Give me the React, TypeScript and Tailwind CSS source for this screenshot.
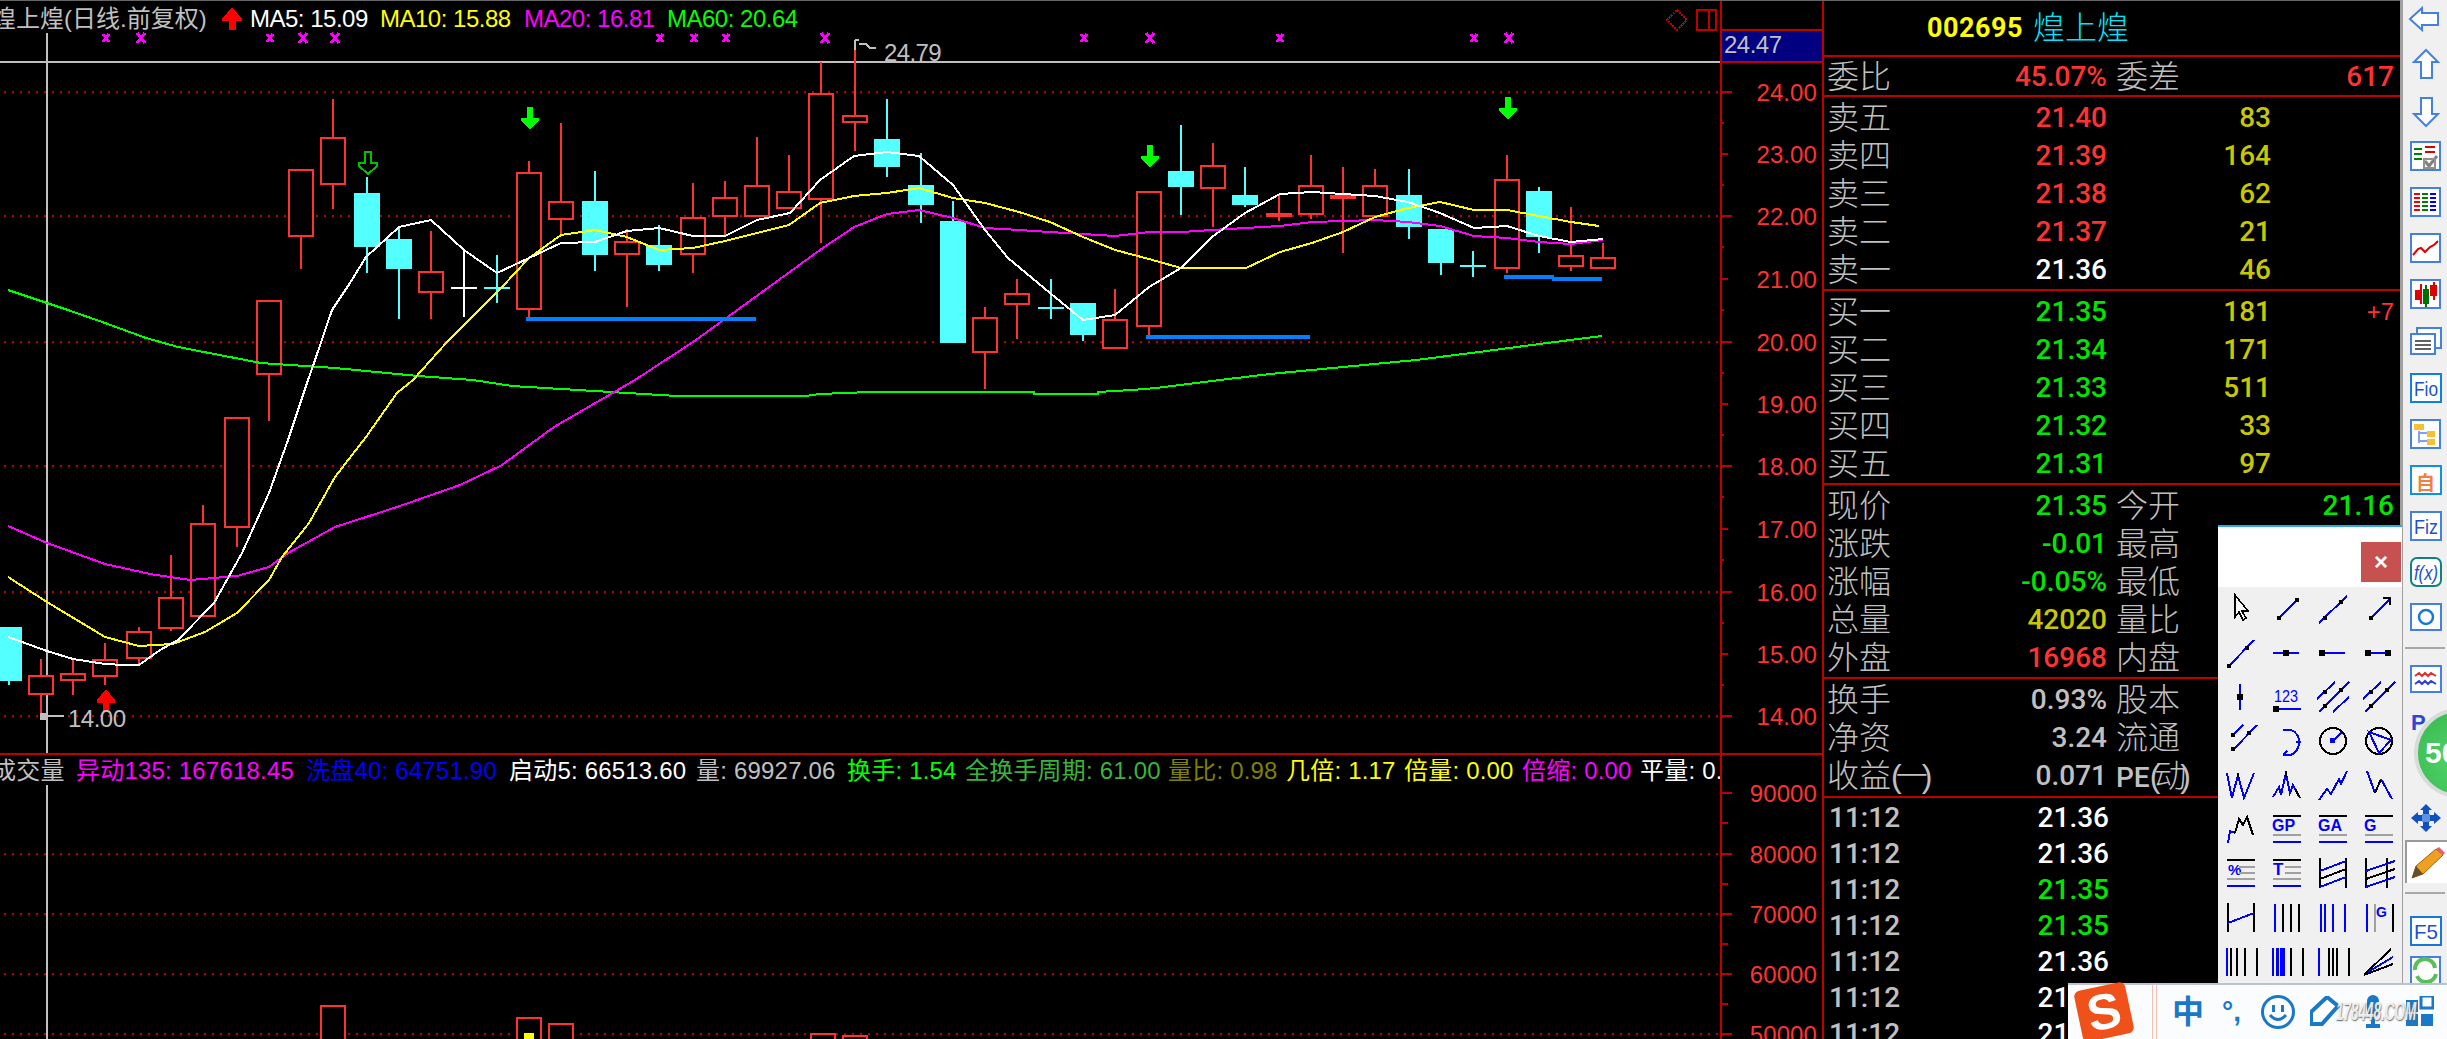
import React from "react";

const FF = "'Liberation Sans','Noto Sans CJK SC',sans-serif";
const RED = "#ff3232";
const CY = "#54ffff";
const DK = "#c00000";

type C = [number, "r" | "c" | "w" | "f" | "d", number, number, number, number];
// x, kind, high, top, bottom, low
const candles: C[] = [
  [9, "c", 627, 627, 681, 685], [41, "r", 659, 675, 695, 715], [73, "r", 659, 673, 681, 695], [105, "r", 643, 659, 677, 685],
  [139, "r", 627, 631, 659, 665], [171, "r", 555, 597, 629, 631], [203, "r", 505, 523, 617, 617], [237, "r", 417, 417, 528, 547],
  [269, "r", 300, 300, 375, 421], [301, "r", 169, 169, 237, 269], [333, "r", 99, 137, 185, 209], [367, "c", 177, 193, 247, 273],
  [399, "c", 227, 239, 269, 319], [431, "r", 231, 271, 293, 319], [464, "w", 251, 288, 288, 317], [497, "d", 255, 288, 288, 303],
  [529, "r", 161, 172, 310, 317], [561, "r", 123, 201, 220, 235], [595, "c", 171, 201, 255, 271], [627, "r", 229, 241, 255, 307],
  [659, "c", 225, 245, 265, 271], [693, "r", 183, 217, 255, 273], [725, "r", 181, 197, 217, 236], [757, "r", 137, 185, 217, 217],
  [789, "r", 155, 191, 209, 209], [821, "r", 62, 93, 200, 243], [855, "r", 47, 115, 123, 151], [887, "c", 99, 139, 167, 177],
  [921, "c", 153, 185, 205, 223], [953, "c", 201, 221, 343, 343], [985, "r", 307, 317, 353, 389], [1017, "r", 279, 293, 305, 339],
  [1051, "d", 279, 308, 308, 319], [1083, "c", 303, 303, 335, 341], [1115, "r", 289, 319, 349, 349], [1149, "r", 191, 191, 327, 335],
  [1181, "c", 125, 171, 187, 215], [1213, "r", 143, 165, 189, 227], [1245, "c", 167, 195, 205, 207], [1279, "f", 195, 213, 217, 221],
  [1311, "r", 155, 185, 215, 219], [1343, "f", 167, 195, 199, 253], [1375, "r", 169, 185, 217, 217], [1409, "c", 169, 195, 227, 239],
  [1441, "c", 229, 229, 263, 275], [1473, "d", 251, 266, 266, 277], [1507, "r", 155, 179, 269, 273], [1539, "c", 187, 191, 237, 253],
  [1571, "r", 207, 255, 267, 271], [1603, "r", 243, 257, 269, 269],
];

const ma5 = "8,637 47,651 73,659 105,664 125,665 139,665 160,650 178,640 214,603 242,553 269,493 288,440 308,380 314,363 332,310 350,283 366,257 399,227 431,220 464,250 497,273 529,258 561,243 595,242 627,231 659,228 693,236 725,236 757,220 790,213 820,180 854,156 887,152 919,156 953,185 985,230 1008,258 1050,293 1083,320 1115,315 1149,287 1181,268 1212,237 1245,213 1280,194 1312,192 1343,194 1375,196 1408,202 1440,213 1474,228 1507,226 1539,236 1571,242 1603,239";
const ma10 = "8,577 47,602 105,637 139,646 173,644 205,632 237,613 269,580 282,557 309,523 335,477 366,437 397,393 413,380 447,342 502,287 529,258 561,235 595,230 627,237 659,250 693,248 725,241 757,233 789,225 820,203 854,196 887,193 919,188 953,198 985,203 1019,212 1050,222 1083,237 1115,250 1149,259 1181,268 1246,268 1280,252 1312,243 1343,232 1375,217 1408,208 1440,202 1474,210 1507,210 1539,216 1571,222 1599,226";
const ma20 = "8,526 47,543 105,564 150,574 190,580 237,576 269,567 288,553 335,527 397,507 460,485 502,465 554,427 635,380 696,340 820,250 854,227 887,214 919,210 953,218 985,228 1019,230 1050,232 1083,234 1115,236 1149,232 1181,232 1212,230 1246,228 1280,226 1312,222 1375,220 1408,222 1440,226 1474,236 1507,238 1539,242 1571,244 1603,240";
const ma60 = "8,290 47,303 68,310 105,323 146,338 178,347 261,363 335,368 418,376 473,380 512,386 578,390 677,396 805,396 820,394 870,392 1034,392 1034,394 1098,394 1098,392 1132,390 1156,388 1188,384 1220,380 1270,374 1343,367 1416,360 1479,352 1547,343 1602,336";

const xmarks: [number, number][] = [[106, 3], [141, 4], [270, 3], [303, 4], [335, 4], [660, 3], [694, 3], [726, 3], [825, 4], [1084, 3], [1150, 4], [1280, 3], [1474, 3], [1509, 4]];
const priceTicks: [number, string][] = [[92, "24.00"], [154, "23.00"], [216, "22.00"], [279, "21.00"], [342, "20.00"], [404, "19.00"], [466, "18.00"], [529, "17.00"], [592, "16.00"], [654, "15.00"], [716, "14.00"]];
const volTicks: [number, string][] = [[793, "90000"], [854, "80000"], [914, "70000"], [974, "60000"], [1034, "50000"]];

function DownArrow({ x, y, hollow }: { x: number; y: number; hollow?: boolean }) {
  const p = `${x - 3},${y} ${x + 3},${y} ${x + 3},${y + 11} ${x + 9},${y + 11} ${x + 9},${y + 14} ${x},${y + 22} ${x - 9},${y + 14} ${x - 9},${y + 11} ${x - 3},${y + 11}`;
  return <polygon points={p} fill={hollow ? "none" : "#00ff00"} stroke={hollow ? "#00c000" : "#00ff00"} strokeWidth={hollow ? 2 : 0} />;
}

function PriceChart() {
  return (
    <svg className="block" width={1720} height={752} viewBox="0 1 1720 752" shapeRendering="crispEdges">
      {[92, 216, 342, 466, 592, 716].map((y) => (
        <line key={y} x1={4} x2={1720} y1={y} y2={y} stroke={DK} strokeWidth={2} strokeDasharray="2 6" />
      ))}
      <rect x={46} y={33} width={2} height={720} fill="#c0c0c0" />
      <rect x={0} y={61} width={1720} height={2} fill="#c0c0c0" />
      {candles.map(([x, k, hi, top, bot, lo]) => {
        const col = k === "c" || k === "d" ? CY : k === "w" ? "#ffffff" : RED;
        return (
          <g key={x}>
            <rect x={x - 1} y={hi} width={2} height={lo - hi} fill={col} />
            {k === "r" && <rect x={x - 12} y={top + 1} width={24} height={bot - top - 2} fill="#000" stroke={RED} strokeWidth={2} />}
            {k === "c" && <rect x={x - 13} y={top} width={26} height={bot - top} fill={CY} />}
            {k === "f" && <rect x={x - 13} y={top} width={26} height={bot - top} fill={RED} />}
            {(k === "w" || k === "d") && <rect x={x - 13} y={top - 1} width={26} height={2} fill={col} />}
          </g>
        );
      })}
      <polyline points={ma60} fill="none" stroke="#00ff00" strokeWidth={2} />
      <polyline points={ma20} fill="none" stroke="#ff00ff" strokeWidth={2} />
      <polyline points={ma10} fill="none" stroke="#ffff00" strokeWidth={2} />
      <polyline points={ma5} fill="none" stroke="#ffffff" strokeWidth={2} />
      <rect x={526} y={317} width={230} height={4} fill="#0080ff" />
      <rect x={1146} y={335} width={164} height={4} fill="#0080ff" />
      <rect x={1504} y={275} width={50} height={4} fill="#0080ff" />
      <rect x={1552} y={277} width={50} height={4} fill="#0080ff" />
      {xmarks.map(([x, r]) => (
        <path key={x} d={`M${x - r} ${38 - r - 1}L${x + r} ${38 + r + 1}M${x + r} ${38 - r - 1}L${x - r} ${38 + r + 1}`} stroke="#ff00ff" strokeWidth={3} fill="none" />
      ))}
      <DownArrow x={530} y={107} />
      <DownArrow x={1150} y={145} />
      <DownArrow x={1508} y={97} />
      <DownArrow x={368} y={152} hollow />
      <polygon points="106,689 115,700 115,703 109,703 109,711 103,711 103,703 97,703 97,700" fill="#ff0000" />
      <path d="M855 40V50M855 40H859M859 44H866L870 48H876" stroke="#c0c0c0" strokeWidth={2} fill="none" />
      <text x={884} y={61} fill="#c0c0c0" fontFamily={FF} fontSize={24} letterSpacing={-0.6} shapeRendering="auto">24.79</text>
      <rect x={40} y={713} width={6} height={7} fill="#c0c0c0" />
      <rect x={46} y={715} width={18} height={2} fill="#c0c0c0" />
      <text x={68} y={727} fill="#c0c0c0" fontFamily={FF} fontSize={24} letterSpacing={-0.5}>14.00</text>
      <path d="M1677 10L1687 20L1677 30L1667 20Z" fill="none" stroke={DK} strokeWidth={2} strokeDasharray="2 1" />
      <rect x={1697} y={10} width={19} height={20} fill="none" stroke={DK} strokeWidth={2} />
      <rect x={1708} y={10} width={2} height={20} fill={DK} />
    </svg>
  );
}

function PriceAxis() {
  return (
    <svg className="block" width={100} height={752} viewBox="1722 1 100 752" shapeRendering="crispEdges">
      <rect x={1722} y={29} width={100} height={34} fill={DK} />
      <rect x={1722} y={31} width={100} height={30} fill="#000080" />
      <text x={1724} y={53} fill="#c0c0c0" fontFamily={FF} fontSize={24} letterSpacing={-0.5}>24.47</text>
      {priceTicks.map(([y, t], i) => (
        <g key={t}>
          <rect x={1722} y={y - 1} width={i % 2 === 0 ? 10 : 6} height={2} fill={DK} />
          {i < 10 && <rect x={1722} y={y + 30} width={2} height={2} fill={DK} />}
          <text x={1817} y={y + 9} textAnchor="end" fill={RED} fontFamily={FF} fontSize={24} letterSpacing={0.1}>{t}</text>
        </g>
      ))}
    </svg>
  );
}

function VolumeChart() {
  const bars: [number, number][] = [[320, 1005], [516, 1017], [548, 1023], [810, 1033], [842, 1035]];
  return (
    <svg className="block" width={1720} height={254} viewBox="0 785 1720 254" shapeRendering="crispEdges">
      {[854, 914, 974, 1034].map((y) => (
        <line key={y} x1={4} x2={1720} y1={y} y2={y} stroke={DK} strokeWidth={2} strokeDasharray="2 6" />
      ))}
      <rect x={46} y={785} width={2} height={254} fill="#c0c0c0" />
      {bars.map(([x, y]) => (
        <rect key={x} x={x + 1} y={y + 1} width={24} height={60} fill="#000" stroke={RED} strokeWidth={2} />
      ))}
      <rect x={524} y={1033} width={10} height={6} fill="#ffff00" />
    </svg>
  );
}

function VolumeAxis() {
  return (
    <svg className="block" width={100} height={284} viewBox="1722 755 100 284" shapeRendering="crispEdges">
      {volTicks.map(([y, t]) => (
        <g key={t}>
          <rect x={1722} y={y - 1} width={10} height={2} fill={DK} />
          <rect x={1722} y={y + 29} width={6} height={2} fill={DK} />
          <text x={1817} y={y + 9} textAnchor="end" fill={RED} fontFamily={FF} fontSize={24} letterSpacing={0.1}>{t}</text>
        </g>
      ))}
    </svg>
  );
}

const legend2 = [
  { t: "成交量", c: "text-[#c0c0c0] w-[84px] ml-[-8px]" },
  { t: "异动135: 167618.45", c: "text-[#ff00ff] w-[230px]" },
  { t: "洗盘40: 64751.90", c: "text-[#0000ff] w-[203px]" },
  { t: "启动5: 66513.60", c: "text-[#ffffff] w-[187px]" },
  { t: "量: 69927.06", c: "text-[#c0c0c0] w-[151px]" },
  { t: "换手: 1.54", c: "text-[#00ff00] w-[118px]" },
  { t: "全换手周期: 61.00", c: "text-[#3cb33c] w-[203px]" },
  { t: "量比: 0.98", c: "text-[#808000] w-[118px]" },
  { t: "几倍: 1.17", c: "text-[#ffff00] w-[118px]" },
  { t: "倍量: 0.00", c: "text-[#ffff00] w-[118px]" },
  { t: "倍缩: 0.00", c: "text-[#ff00ff] w-[118px]" },
  { t: "平量: 0.", c: "text-[#ffffff] w-[82px]" },
];

function Depth({ l, p, q, pc, e }: { l: string; p: string; q: string; pc: string; e?: string }) {
  return (
    <div className="flex h-[38px] items-center pl-[3px] pr-[6px] pt-[2px]">
      <span className="flex w-[280px] items-center justify-between">
        <span className="text-[32px] font-light leading-none text-[#c0c0c0]">{l}</span>
        <span className={`[font-family:Roboto] text-[28px] font-medium leading-none ${pc}`}>{p}</span>
      </span>
      <span className="w-[164px] text-right [font-family:Roboto] text-[28px] font-medium leading-none text-[#c8c800]">{q}</span>
      <span className="flex-1 text-right text-[24px] leading-none text-[#ff3232]">{e}</span>
    </div>
  );
}

function Quote({ l, v, vc, l2, v2 }: { l: React.ReactNode; v: string; vc: string; l2: React.ReactNode; v2?: string }) {
  return (
    <div className="flex h-[38px] items-center pl-[3px] pr-[6px] pt-[2px]">
      <span className="flex w-[280px] items-center justify-between">
        <span className="whitespace-nowrap text-[32px] font-light leading-none text-[#c0c0c0]">{l}</span>
        <span className={`[font-family:Roboto] text-[28px] font-medium leading-none ${vc}`}>{v}</span>
      </span>
      <span className="ml-[9px] flex flex-1 items-center justify-between">
        <span className="whitespace-nowrap text-[32px] font-light leading-none text-[#c0c0c0]">{l2}</span>
        <span className={`[font-family:Roboto] text-[28px] font-medium leading-none ${v === "45.07%" ? "text-[#ff3232]" : "text-[#00e600]"}`}>{v2}</span>
      </span>
    </div>
  );
}

function Panel() {
  const sells = [["卖五", "21.40", "83"], ["卖四", "21.39", "164"], ["卖三", "21.38", "62"], ["卖二", "21.37", "21"], ["卖一", "21.36", "46"]];
  const buys = [["买一", "21.35", "181", "+7"], ["买二", "21.34", "171"], ["买三", "21.33", "511"], ["买四", "21.32", "33"], ["买五", "21.31", "97"]];
  const trades = ["21.36", "21.36", "21.35", "21.35", "21.36", "21.36", "21.36"];
  return (
    <div className="w-[578px] shrink-0 border-l-2 border-[#c00000]">
      <div className="flex h-[56px] items-center border-b-2 border-[#c00000] pl-[103px]">
        <span className="[font-family:Roboto] text-[27px] font-bold leading-none tracking-[0.5px] text-[#ffff00]">002695</span>
        <span className="ml-[10px] text-[32px] font-light leading-none text-[#00e5ff]">煌上煌</span>
      </div>
      <div className="border-b-2 border-[#c00000]">
        <Quote l="委比" v="45.07%" vc="text-[#ff3232]" l2="委差" v2="617" />
      </div>
      <div className="border-b-2 border-[#c00000] py-px">
        {sells.map(([l, p, q]) => (
          <Depth key={l} l={l} p={p} q={q} pc={p === "21.36" ? "text-white" : "text-[#ff3232]"} />
        ))}
      </div>
      <div className="border-b-2 border-[#c00000] py-px">
        {buys.map(([l, p, q, e]) => (
          <Depth key={l} l={l} p={p} q={q} e={e} pc="text-[#00e600]" />
        ))}
      </div>
      <div className="border-b-2 border-[#c00000] py-px">
        <Quote l="现价" v="21.35" vc="text-[#00e600]" l2="今开" v2="21.16" />
        <Quote l="涨跌" v="-0.01" vc="text-[#00e600]" l2="最高" />
        <Quote l="涨幅" v="-0.05%" vc="text-[#00e600]" l2="最低" />
        <Quote l="总量" v="42020" vc="text-[#c8c800]" l2="量比" />
        <Quote l="外盘" v="16968" vc="text-[#ff3232]" l2="内盘" />
      </div>
      <div className="border-b-2 border-[#c00000] pb-[2px] pt-px">
        <Quote l="换手" v="0.93%" vc="text-[#c0c0c0]" l2="股本" />
        <Quote l="净资" v="3.24" vc="text-[#c0c0c0]" l2="流通" />
        <Quote
          l={<>收益<span className="tracking-[-6px]">(一)</span></>}
          v="0.071"
          vc="text-[#c0c0c0]"
          l2={<><span className="[font-family:Roboto] text-[28px] font-medium">PE</span><span className="tracking-[-6px]">(动)</span></>}
        />
      </div>
      {trades.map((p, i) => (
        <div key={i} className="flex h-[36px] w-[285px] items-center justify-between pl-[5px] pt-[3px] [font-family:Roboto] text-[28px] font-medium leading-none">
          <span className="text-[#c0c0c0]">11:12</span>
          <span className={i === 2 || i === 3 ? "text-[#00e600]" : "text-white"}>{p}</span>
        </div>
      ))}
    </div>
  );
}

const B = "#0000ff";
const K = "#000000";
const G = "#a0a0a0";
function Sq({ x, y, s = 4 }: { x: number; y: number; s?: number }) {
  return <rect x={x - s / 2} y={y - s / 2} width={s} height={s} fill={K} />;
}
function L({ d, c = B, w = 2 }: { d: string; c?: string; w?: number }) {
  return <path d={d} stroke={c} strokeWidth={w} fill="none" />;
}
function T({ x, y, t, s = 15, c = B }: { x: number; y: number; t: string; s?: number; c?: string }) {
  return <text x={x} y={y} fill={c} fontFamily={FF} fontSize={s} fontWeight={700} shapeRendering="auto">{t}</text>;
}
const Ver = (xs: [number, string, number?][]) => xs.map(([x, c, w], i) => <rect key={i} x={x} y={3} width={w ?? 2} height={28} fill={c} />);
const rule3 = (
  <>
    <L d="M2 3H30" c={K} />
    <L d="M2 22H30" c={G} />
    <L d="M2 29H30" />
  </>
);
const tools: React.ReactNode[] = [
  <path d="M10 2V24L14 19L18 27L21 25L17 18H23Z" fill="#f8f8f8" stroke={K} strokeWidth={1.6} />,
  <><L d="M8 25L26 7" /><Sq x={8} y={25} /><Sq x={26} y={7} /></>,
  <><L d="M2 30L30 3" /><Sq x={8} y={25} /><Sq x={24} y={9} /></>,
  <><L d="M8 25L27 6" /><L d="M20 5H27V12" c={K} /><Sq x={8} y={25} /></>,
  <><L d="M3 30L29 3" /><Sq x={4} y={29} /><Sq x={22} y={11} /></>,
  <><L d="M2 16H28" /><Sq x={15} y={16} s={6} /></>,
  <><L d="M2 16H28" /><Sq x={5} y={16} s={6} /></>,
  <><L d="M5 16H25" /><Sq x={5} y={16} s={6} /><Sq x={25} y={16} s={6} /></>,
  <><L d="M15 3V29" /><Sq x={15} y={16} s={6} /></>,
  <><text x={3} y={21} fill={B} fontFamily={FF} fontSize={17} textLength={24} lengthAdjust="spacingAndGlyphs" shapeRendering="auto">123</text><L d="M5 28H30" /><Sq x={5} y={28} s={6} /></>,
  <><L d="M0 18L18 1M2 31L32 1M16 31L32 16" /><Sq x={8} y={11} /><Sq x={24} y={9} /><Sq x={8} y={25} /></>,
  <><L d="M0 18L18 1M2 31L32 1" /><Sq x={8} y={11} /><Sq x={24} y={9} /><Sq x={8} y={25} /></>,
  <><L d="M6 12L18 0M8 25L32 0" /><Sq x={8} y={10} /><Sq x={24} y={8} /><Sq x={8} y={24} /></>,
  <><L d="M12 5H20Q28 8 28 17Q28 26 20 30H12M25 17H30M12 30L16 26" /></>,
  <><circle cx={16} cy={16} r={13} fill="none" stroke={K} strokeWidth={2} /><L d="M16 16L24 8" /><rect x={13} y={13} width={5} height={5} fill={B} /></>,
  <><circle cx={16} cy={16} r={13} fill="none" stroke={K} strokeWidth={2} /><polygon points="6,7 28,15 16,28" fill="none" stroke={B} strokeWidth={2} /></>,
  <><L d="M2 4L7 29L13 6L19 29L29 4" /><L d="M13 4V8" c={K} /></>,
  <><L d="M2 28L8 18L10 26L15 4L19 24L22 16L29 29" /><L d="M15 2V8M24 20L29 29" c={K} /></>,
  <><L d="M2 31L10 20L14 25L22 10L24 15L30 2" /></>,
  <><L d="M4 2L12 24" /><L d="M12 24L18 10" c={K} /><L d="M18 10L29 30" /></>,
  <><L d="M3 30L5 18L10 20" /><L d="M10 20L14 6L18 12L22 4L28 22" c={K} /></>,
  <>{rule3}<T x={1} y={18} t="GP" s={16} /></>,
  <>{rule3}<T x={1} y={18} t="GA" s={16} /></>,
  <>{rule3}<T x={1} y={18} t="G" s={16} /></>,
  <>{rule3}<T x={3} y={18} t="%" s={15} /><L d="M14 10H30M14 16H30" c={G} /></>,
  <>{rule3}<T x={2} y={18} t="T" s={17} /><L d="M14 10H30M14 16H30" c={G} /></>,
  <><L d="M3 1V31M29 1V31" c={K} /><L d="M3 14L29 4M3 30L29 20" /><L d="M3 22L29 12" c={K} /></>,
  <><L d="M3 1V31M24 1V31" c={K} /><L d="M3 14L32 4M3 30L32 20" /><L d="M3 22L32 12" c={K} /></>,
  <><L d="M3 2V31M29 2V31" c={K} /><L d="M3 22L29 12" /></>,
  <>{Ver([[3, B], [11, K], [19, K], [27, K]])}</>,
  <>{Ver([[3, B], [7, B], [15, B], [27, B]])}</>,
  <>{Ver([[3, B], [11, G], [29, K]])}<T x={13} y={16} t="G" s={14} /></>,
  <>{Ver([[1, B], [5, K], [11, K], [19, K], [31, K]])}</>,
  <>{Ver([[1, B], [5, B, 3], [9, B, 5], [19, K], [31, K]])}</>,
  <>{Ver([[1, B], [11, K], [15, K], [19, K], [31, K]])}</>,
  <><L d="M1 30L28 4M1 30L30 19" c={K} /><L d="M5 27L30 12" /></>,
];

function Toolbar() {
  return (
    <div className="absolute left-[2218px] top-[525px] w-[184px] border-t-2 border-[#33a5e5]">
      <div className="flex h-[60px] items-start justify-end bg-white pr-px pt-[15px]">
        <div className="flex h-[40px] w-[40px] items-center justify-center bg-[#c75050] text-[24px] font-bold leading-none text-white">×</div>
      </div>
      <div className="grid h-[396px] grid-cols-[repeat(4,46px)] grid-rows-[repeat(9,44px)] bg-[#f0f0f0]">
        {tools.map((n, i) => (
          <div key={i} className="flex items-center justify-center">
            <svg width={32} height={32} viewBox="0 0 32 32" shapeRendering="crispEdges" className="overflow-visible">{n}</svg>
          </div>
        ))}
      </div>
    </div>
  );
}

const SB = "#4480e0";
function Ico({ h, mt, children }: { h: number; mt: string; children: React.ReactNode }) {
  return (
    <svg className={`block shrink-0 overflow-visible ${mt}`} width={42} height={h} viewBox={`0 0 42 ${h}`}>
      {children}
    </svg>
  );
}
const box = (c = SB, h = 28, w = 29) => <rect x={6} y={1} width={w} height={h} fill="#fff" stroke={c} strokeWidth={2} shapeRendering="crispEdges" />;
function IcoText({ t, italic }: { t: string; italic?: boolean }) {
  return <text x={9} y={23} fontFamily={FF} fontSize={21} fontStyle={italic ? "italic" : "normal"} fill="#2050d0" textLength={24} lengthAdjust="spacingAndGlyphs">{t}</text>;
}

function Sidebar() {
  const rows = [3, 7, 11, 15, 19];
  return (
    <div className="flex h-[1039px] w-[47px] shrink-0 flex-col border-l-[3px] border-[#a0a0a0] bg-[#f0f0f0] pl-[2px] pt-[7px]">
      <Ico h={24} mt="mt-0"><polygon points="5,12 17,1 17,6 33,6 33,18 17,18 17,23" fill="#fff" stroke={SB} strokeWidth={2} /></Ico>
      <Ico h={30} mt="mt-[18px]"><polygon points="21,1 33,13 27,13 27,29 16,29 16,13 9,13" fill="#fff" stroke={SB} strokeWidth={2} /></Ico>
      <Ico h={30} mt="mt-[18px]"><polygon points="16,1 27,1 27,17 33,17 21,29 9,17 16,17" fill="#fff" stroke={SB} strokeWidth={2} /></Ico>
      <Ico h={30} mt="mt-[14px]">
        {box()}
        {[7, 12, 17].map((y) => <rect key={y} x={9} y={y} width={8} height={2} fill="#008000" />)}
        {[5, 10].map((y) => <rect key={y} x={20} y={y} width={10} height={2} fill="#e00000" />)}
        <path d="M20 20L24 25L32 15" stroke="#808080" strokeWidth={3} fill="none" />
        <rect x={19} y={18} width={11} height={9} fill="none" stroke="#909090" strokeWidth={2} />
      </Ico>
      <Ico h={30} mt="mt-[16px]">
        {box()}
        {rows.map((y) => (
          <g key={y}>
            <rect x={9} y={y + 3} width={6} height={2} fill="#f00000" />
            <rect x={17} y={y + 3} width={6} height={2} fill="#008000" />
            <rect x={25} y={y + 3} width={6} height={2} fill="#0000ff" />
          </g>
        ))}
      </Ico>
      <Ico h={30} mt="mt-[16px]">{box()}<polyline points="8,22 13,16 16,15 20,19 25,14 29,12 33,8" fill="none" stroke="#e00000" strokeWidth={2} /></Ico>
      <Ico h={30} mt="mt-[16px]">
        {box()}
        <rect x={15} y={5} width={2} height={20} fill="#e00000" /><rect x={10} y={11} width={6} height={10} fill="#e00000" />
        <rect x={20} y={6} width={2} height={22} fill="#007000" /><rect x={18} y={10} width={6} height={15} fill="#007000" />
        <rect x={28} y={3} width={2} height={18} fill="#e00000" /><rect x={25} y={6} width={7} height={11} fill="#e00000" />
      </Ico>
      <Ico h={28} mt="mt-[18px]">
        <rect x={12} y={1} width={24} height={20} fill="#fff" stroke={SB} strokeWidth={2} />
        <rect x={6} y={7} width={24} height={20} fill="#fff" stroke={SB} strokeWidth={2} />
        {[13, 17, 21].map((y) => <rect key={y} x={10} y={y} width={16} height={2} fill="#606060" />)}
      </Ico>
      <Ico h={30} mt="mt-[18px]">{box("#1080e0", 28, 30)}<IcoText t="Fio" /></Ico>
      <Ico h={30} mt="mt-[16px]">
        {box()}
        <path d="M14 12V24M14 14H22M14 22H22" stroke="#80a0f0" strokeWidth={2} fill="none" />
        <rect x={9} y={5} width={10} height={6} fill="#f8c030" /><rect x={22} y={12} width={8} height={6} fill="#f8c030" /><rect x={22} y={20} width={8} height={6} fill="#f8c030" />
      </Ico>
      <Ico h={30} mt="mt-[16px]">{box("#1090e0", 28, 30)}<text x={11} y={25} fontFamily="'Noto Sans CJK SC'" fontSize={19} fontWeight={700} fill="#f08040">自</text></Ico>
      <Ico h={30} mt="mt-[16px]">{box("#4480e0", 28, 30)}<IcoText t="Fiz" /></Ico>
      <Ico h={30} mt="mt-[16px]"><rect x={6} y={1} width={30} height={28} rx={6} fill="#fff" stroke="#108080" strokeWidth={2} /><IcoText t="f(x)" italic /></Ico>
      <Ico h={28} mt="mt-[16px]">{box("#4480e0", 26, 30)}<circle cx={21} cy={14} r={7} fill="none" stroke="#1878d8" strokeWidth={2.5} /></Ico>
      <div className="mt-[16px] h-[2px] w-[40px] shrink-0 bg-[#a8a8a8]" />
      <Ico h={28} mt="mt-[16px]">
        {box("#4480e0", 26, 30)}
        <polyline points="10,11 14,8 17,11 20,8 23,11 26,8 31,11" fill="none" stroke="#e03030" strokeWidth={2} />
        <polyline points="10,19 14,16 17,19 20,16 23,19 26,16 31,19" fill="none" stroke="#3040d0" strokeWidth={2} />
      </Ico>
      <div className="ml-[6px] mt-[21px] h-[18px] shrink-0 text-[22px] font-bold leading-[18px] text-[#3048d0]">P</div>
      <Ico h={30} mt="mt-[71px]">
        <polygon points="21,1 27,7 24,7 24,12 29,12 29,9 36,15 29,21 29,18 24,18 24,23 27,23 21,29 15,23 18,23 18,18 13,18 13,21 6,15 13,9 13,12 18,12 18,7 15,7" fill="#1050c0" />
        <rect x={17} y={11} width={8} height={8} fill="#6090e0" />
      </Ico>
      <div className="mt-[7px] flex h-[43px] w-[43px] shrink-0 items-center justify-center border-l-2 border-t-2 border-[#9a9a9a] bg-white">
        <svg width={36} height={34} viewBox="0 0 36 34">
          <polygon points="2,32 6,20 26,3 33,9 13,28" fill="#f0a020" stroke="#a06010" strokeWidth={1} />
          <polygon points="26,3 29,1 35,7 33,9" fill="#e06070" />
          <polygon points="2,32 6,20 13,28" fill="#605030" />
        </svg>
      </div>
      <div className="mt-[9px] h-[2px] w-[40px] shrink-0 bg-[#a8a8a8]" />
      <Ico h={30} mt="mt-[22px]">{box("#1878d8", 28, 30)}<IcoText t="F5" /></Ico>
      <Ico h={30} mt="mt-[10px]">
        {box()}
        <path d="M10 14A10 10 0 0 1 30 12" stroke="#58c058" strokeWidth={4} fill="none" />
        <path d="M31 18A10 10 0 0 1 12 20" stroke="#58c058" strokeWidth={4} fill="none" />
      </Ico>
    </div>
  );
}

function Ime() {
  return (
    <div className="absolute left-[2068px] top-[983px] flex h-[56px] w-[379px] items-center border-t-2 border-[#b8c4d0] bg-[#fbfcfd]">
      <div className="ml-[10px] flex h-[52px] w-[52px] -rotate-12 items-center justify-center rounded-[6px] bg-[#f0501a] text-[50px] font-bold leading-none text-white">S</div>
      <div className="ml-[22px] h-full w-[5px] border-x border-[#f8c0b0]" />
      <span className="ml-[15px] text-[32px] font-bold leading-none text-[#1a78c8]">中</span>
      <span className="ml-[18px] text-[28px] font-bold leading-none text-[#1a78c8]">°,</span>
      <svg className="ml-[19px]" width={36} height={36} viewBox="0 0 36 36">
        <circle cx={18} cy={18} r={15.5} fill="none" stroke="#1a78c8" strokeWidth={3} />
        <rect x={12} y={11} width={3} height={7} fill="#1a78c8" /><rect x={21} y={11} width={3} height={7} fill="#1a78c8" />
        <path d="M10 21Q18 30 26 21" stroke="#1a78c8" strokeWidth={3} fill="none" />
      </svg>
      <svg className="ml-[14px]" width={30} height={32} viewBox="0 0 30 32">
        <polygon points="1,16 17,1 28,10 12,28 1,28" fill="#fff" stroke="#1a78c8" strokeWidth={4} />
      </svg>
      <svg className="ml-[25px]" width={16} height={34} viewBox="0 0 16 34">
        <rect x={2} y={0} width={12} height={22} rx={6} fill="#1a78c8" />
        <rect x={6} y={22} width={4} height={8} fill="#1a78c8" /><rect x={1} y={29} width={14} height={4} fill="#1a78c8" />
      </svg>
      <svg className="ml-[25px]" width={28} height={32} viewBox="0 0 28 32">
        <rect x={0} y={4} width={12} height={12} fill="#1a78c8" /><rect x={15} y={0} width={12} height={12} fill="none" stroke="#1a78c8" strokeWidth={3} />
        <rect x={0} y={18} width={12} height={12} fill="#1a78c8" /><rect x={15} y={18} width={12} height={12} fill="#1a78c8" />
      </svg>
      <span className="absolute left-[268px] top-[14px] origin-left scale-x-[0.54] whitespace-nowrap text-[25px] font-bold italic leading-none text-white/85 [text-shadow:1px_1px_2px_#606060]">178448.COM</span>
    </div>
  );
}

export default function App() {
  return (
    <div className="relative flex h-[1039px] w-[2447px] overflow-hidden bg-black [font-family:'Liberation_Sans','Noto_Sans_CJK_SC',sans-serif]">
      <div className="flex h-[1039px] w-[2400px] shrink-0 flex-col">
        <div className="h-px shrink-0 bg-[#666666]" />
        <div className="flex flex-1">
          <div className="flex w-[1822px] shrink-0 flex-col">
            <div className="flex h-[752px]">
              <div className="relative w-[1720px]">
                <PriceChart />
                <div className="absolute left-0 top-[3px] flex h-[30px] items-center whitespace-nowrap text-[24px] leading-none tracking-[-0.5px]">
                  <span className="ml-[-8px] w-[214px] tracking-normal text-[#c0c0c0]">煌上煌(日线.前复权)</span>
                  <svg className="ml-[16px]" width={28} height={24} viewBox="0 0 28 24" shapeRendering="crispEdges">
                    <polygon points="10,0 20,12 20,14 14,14 14,23 7,23 7,14 0,14 0,12" fill="#ff0000" />
                  </svg>
                  <span className="w-[130px] text-white">MA5: 15.09</span>
                  <span className="w-[144px] text-[#ffff00]">MA10: 15.88</span>
                  <span className="w-[143px] text-[#ff00ff]">MA20: 16.81</span>
                  <span className="text-[#00ff00]">MA60: 20.64</span>
                </div>
              </div>
              <div className="w-[102px] border-l-2 border-[#c00000]"><PriceAxis /></div>
            </div>
            <div className="h-[2px] shrink-0 bg-[#c00000]" />
            <div className="flex flex-1">
              <div className="w-[1720px]">
                <div className="flex h-[30px] items-center overflow-hidden whitespace-nowrap pt-[2px] text-[24px] leading-none tracking-[0.2px]">
                  {legend2.map((i) => (
                    <span key={i.t} className={`shrink-0 ${i.c}`}>{i.t}</span>
                  ))}
                </div>
                <VolumeChart />
              </div>
              <div className="w-[102px] border-l-2 border-[#c00000]"><VolumeAxis /></div>
            </div>
          </div>
          <Panel />
        </div>
      </div>
      <Sidebar />
      <Toolbar />
      <div className="absolute left-[2414px] top-[708px] flex h-[90px] w-[90px] items-center rounded-full border-4 border-[#d8dcd8] bg-[radial-gradient(circle_at_50%_60%,#50d468,#38b850)] pl-[7px] text-[30px] font-bold leading-none text-white">50</div>
      <Ime />
    </div>
  );
}
